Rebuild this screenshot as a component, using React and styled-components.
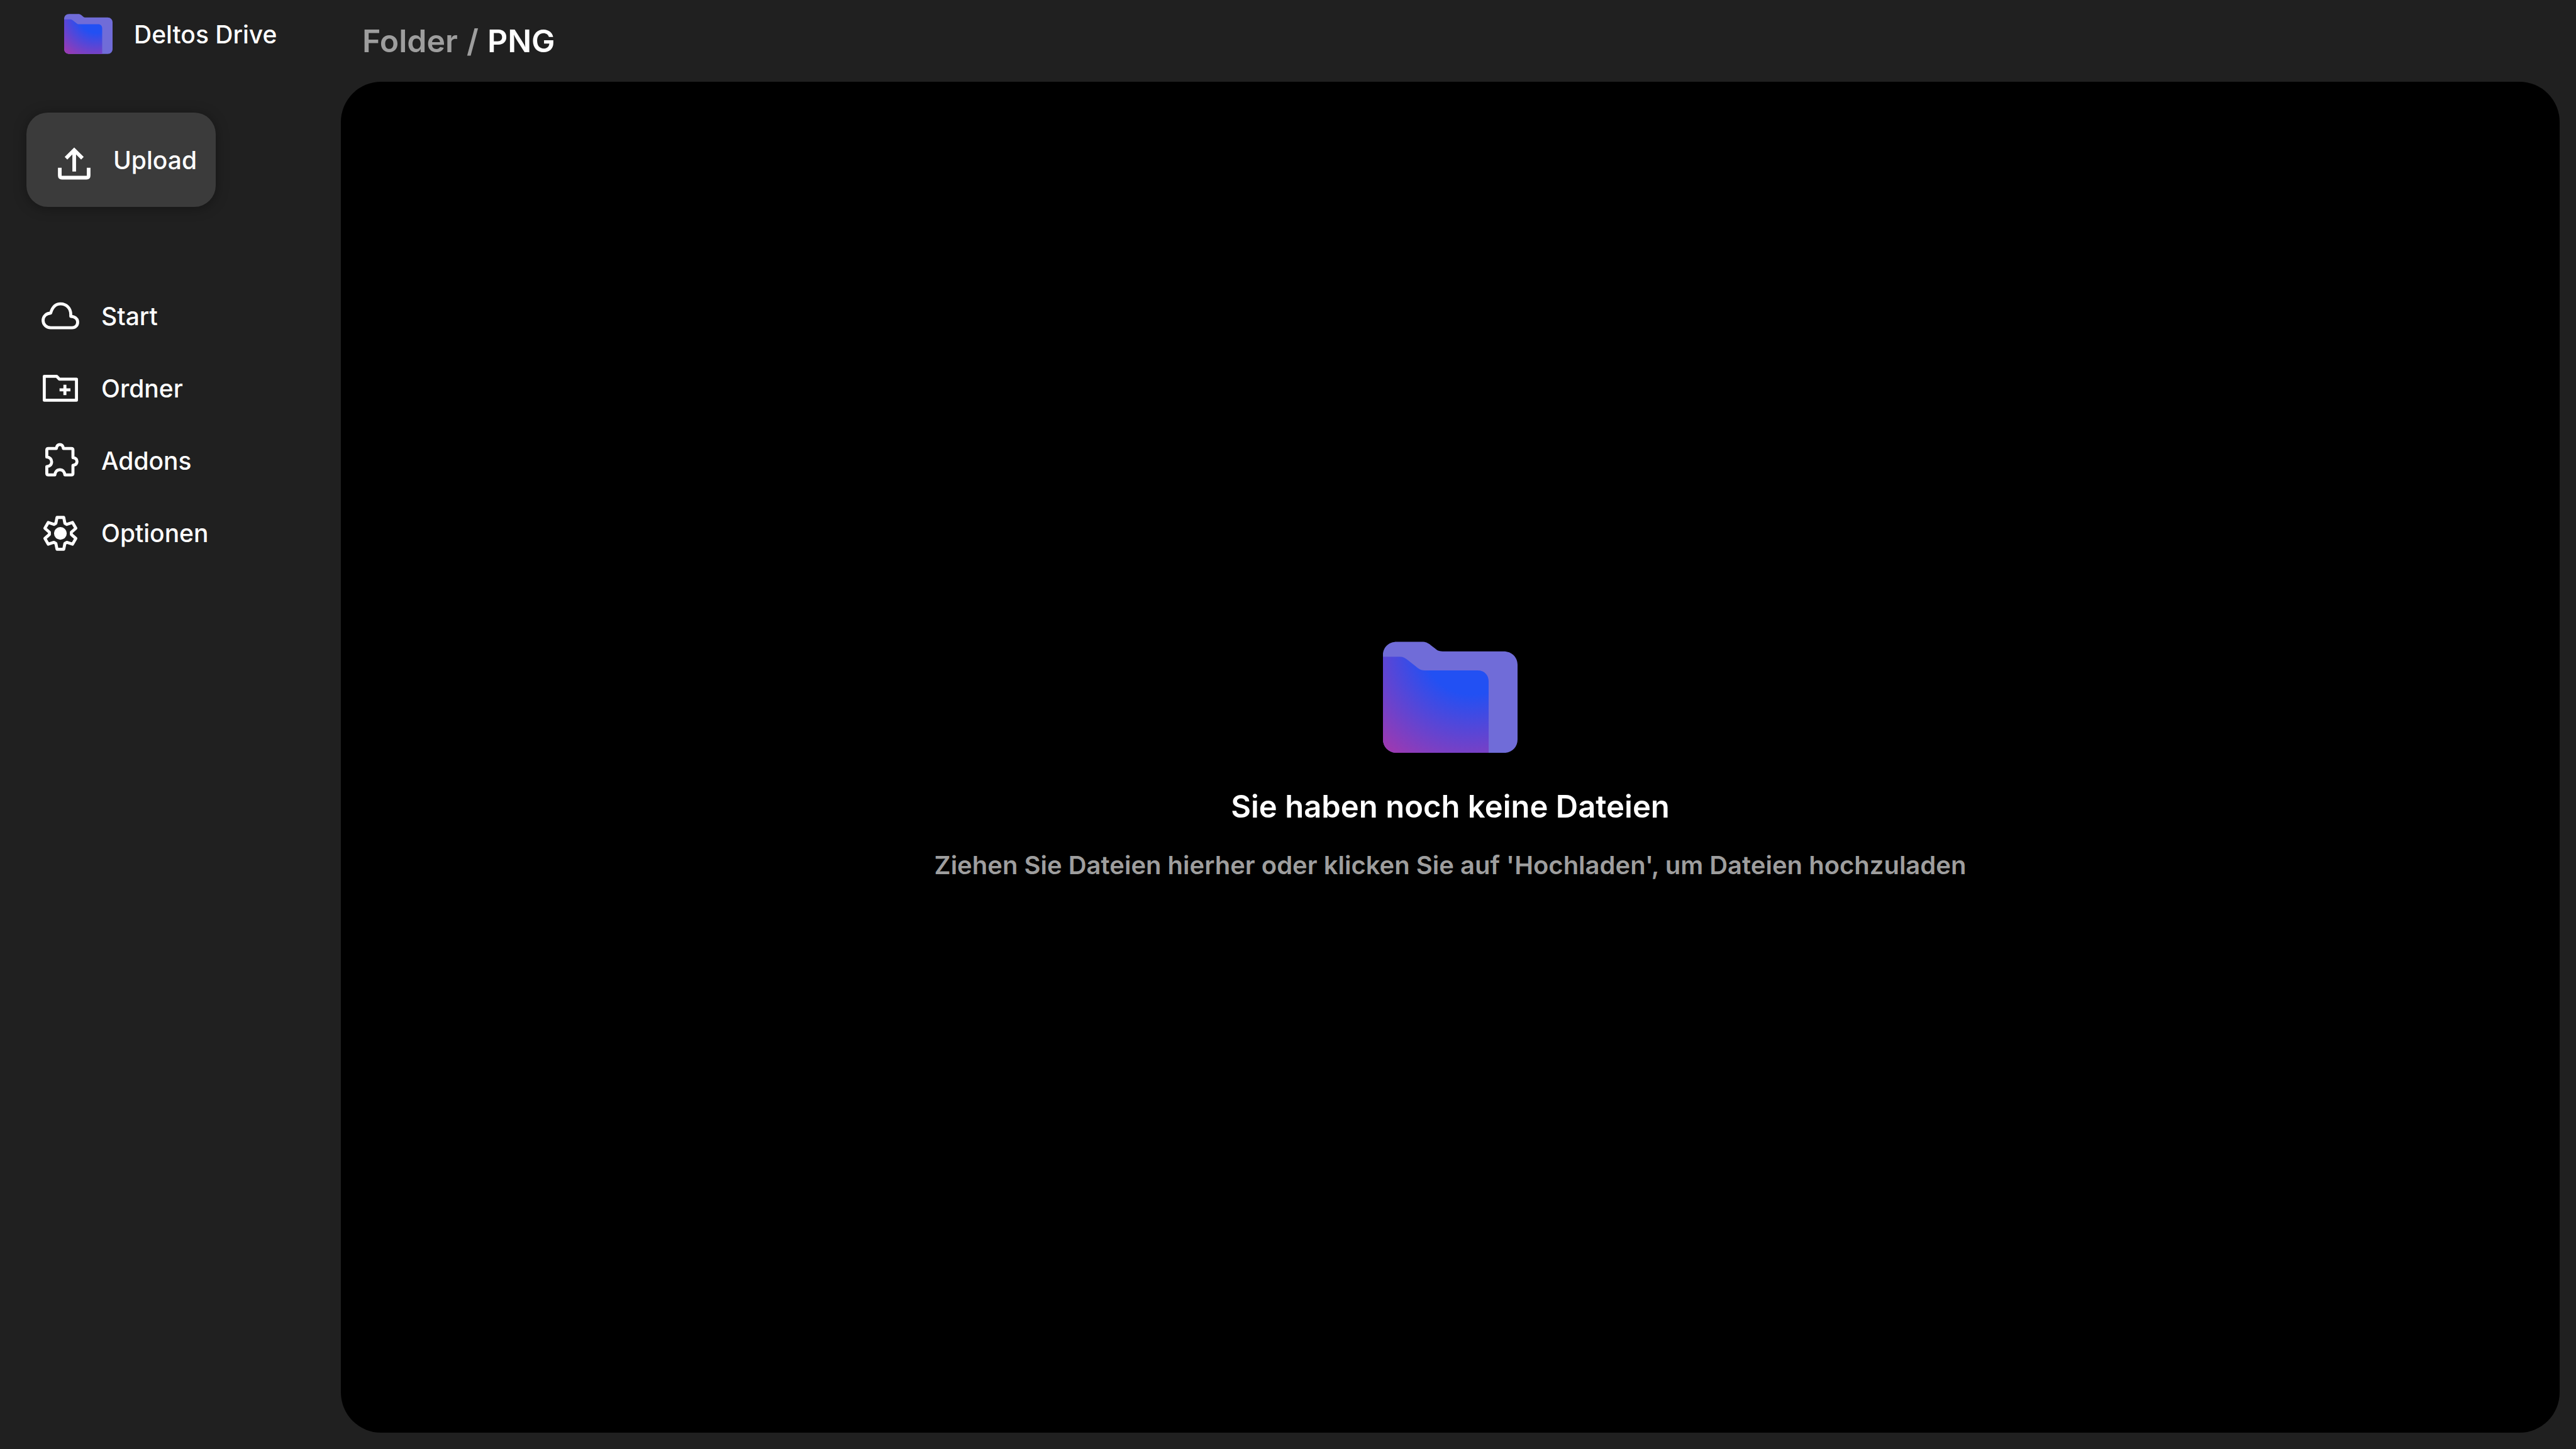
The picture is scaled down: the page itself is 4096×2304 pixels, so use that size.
import React, { useId } from 'react';
import styled, { createGlobalStyle } from 'styled-components';

const GlobalStyle = createGlobalStyle`
  *, *::before, *::after { box-sizing: border-box; }
  body {
    margin: 0;
    background: #202020;
    color: #ffffff;
    font-family: Inter, "Liberation Sans", sans-serif;
    font-size: 39px;
    font-weight: 500;
    line-height: 60px;
  }
`;

const Shell = styled.div`
  display: grid;
  grid-template-columns: 542px minmax(0, 1fr);
  min-height: 100vh;
`;

const Sidebar = styled.aside`
  display: flex;
  flex-direction: column;
  align-items: flex-start;
  padding-top: 22px;
`;

const Brand = styled.a`
  display: flex;
  align-items: center;
  gap: 34px;
  padding-left: 102px;
  color: inherit;
  text-decoration: none;
`;

const FolderSvg = styled.svg`
  display: block;
  width: ${({ $width }) => $width}px;
  height: auto;
`;

const Label = styled.span`
  padding-top: 3px;
`;

const UploadButton = styled.button`
  display: flex;
  align-items: center;
  gap: 30px;
  min-width: 299px;
  height: 150px;
  margin: 93px 0 0 42px;
  padding: 0 30px 0 44px;
  border: 0;
  border-radius: 34px;
  background: #3b3b3b;
  box-shadow: 0 2px 20px rgba(0, 0, 0, 0.35);
  color: inherit;
  font: inherit;
  cursor: pointer;
`;

const Nav = styled.nav`
  margin-top: 141px;
  padding-left: 64px;
`;

const NavList = styled.ul`
  display: flex;
  flex-direction: column;
  gap: 51px;
  margin: 0;
  padding: 0;
  list-style: none;
`;

const NavLink = styled.a`
  display: flex;
  align-items: center;
  gap: 33px;
  height: 64px;
  color: inherit;
  text-decoration: none;
`;

const LineIcon = styled.svg`
  flex: none;
  width: 64px;
  height: 64px;
  fill: none;
  stroke: currentColor;
  stroke-width: 18;
  stroke-linejoin: round;
`;

const Main = styled.main`
  display: flex;
  flex-direction: column;
  padding: 0 26px 26px 0;
`;

const Breadcrumb = styled.nav`
  display: flex;
  align-items: center;
  gap: 14px;
  height: 130px;
  padding-left: 34px;
  color: #9e9e9e;
  font-size: 50px;
  font-weight: 600;
`;

const Crumb = styled.a`
  color: ${({ $current }) => ($current ? '#ffffff' : 'inherit')};
  text-decoration: none;
`;

const DropPanel = styled.section`
  flex: 1;
  display: flex;
  flex-direction: column;
  align-items: center;
  justify-content: center;
  padding-top: 18px;
  border-radius: 64px;
  background: #000000;
  text-align: center;
`;

const EmptyTitle = styled.h1`
  margin: 56px 0 0;
  font-size: 49px;
  font-weight: 600;
  line-height: 60px;
`;

const EmptyHint = styled.p`
  margin: 33px 0 0;
  color: #9e9e9e;
  font-size: 40px;
  font-weight: 600;
`;

function FolderLogo({ width }) {
  const id = useId();
  return (
    <FolderSvg $width={width} viewBox="0 0 801 663" aria-hidden="true">
      <defs>
        <radialGradient id={id} gradientUnits="userSpaceOnUse" cx="530" cy="20" r="822">
          <stop offset="0.36" stopColor="#2250f3" />
          <stop offset="1" stopColor="#a338ae" />
        </radialGradient>
      </defs>
      <path
        fill="#706cd8"
        d="M0 80C0 34 36 2 82 2H232C255 2 268 9 285 22L312 43C327 55 335 59 355 59H718C766 59 801 93 801 138V583C801 630 767 663 720 663H82C36 663 0 629 0 583Z"
      />
      <path
        fill={`url(#${id})`}
        d="M0 91H100C119 91 130 97 145 109L195 148C213 163 225 172 248 172H564C603 172 629 199 629 237V663H82C36 663 0 629 0 583Z"
      />
    </FolderSvg>
  );
}

const UploadIcon = () => (
  <LineIcon viewBox="0 0 240 240" aria-hidden="true">
    <g strokeWidth="22">
      <path d="M120 64V190M71 111L120 62L169 111" strokeLinejoin="miter" />
      <path d="M34 168V214Q34 227 47 227H193Q206 227 206 214V168" />
    </g>
  </LineIcon>
);

const CloudIcon = () => (
  <LineIcon viewBox="0 0 240 240" aria-hidden="true">
    <path d="M62 192C37 192 17 173 17 148C17 124 35 106 62 104C72 70 92 49 121 49C156 49 182 76 182 112V124C206 124 223 138 223 158C223 178 209 192 190 192Z" />
  </LineIcon>
);

const NewFolderIcon = () => (
  <LineIcon viewBox="0 0 240 240" aria-hidden="true">
    <path d="M24 50H98L114 67H216V193H24Z" />
    <path d="M147 100V162M115 131H180" />
  </LineIcon>
);

const AddonIcon = () => (
  <LineIcon viewBox="0 0 240 240" aria-hidden="true">
    <path d="M48 49H96C98 36 104 26 117 26C130 26 136 36 138 49H186Q195 49 195 58V104C210 106 219 115 219 127C219 139 210 148 195 150V198Q195 207 186 207H147C145 190 135 176 117 176C99 176 89 190 87 207H48Q39 207 39 198V157C56 155 68 146 68 129C68 112 56 102 39 100V58Q39 49 48 49Z" />
  </LineIcon>
);

/* One tooth of the gear, turned six times about the centre. */
const TOOTH = [[-27, -60], [-20, -95], [20, -95], [27, -60]];
const GEAR = [0, 1, 2, 3, 4, 5]
  .flatMap((n) => {
    const a = (n * Math.PI) / 3;
    return TOOTH.map(([x, y]) => [
      (120 + x * Math.cos(a) - y * Math.sin(a)).toFixed(1),
      (124 + x * Math.sin(a) + y * Math.cos(a)).toFixed(1),
    ].join(','));
  })
  .join(' ');

const GearIcon = () => (
  <LineIcon viewBox="0 0 240 240" aria-hidden="true">
    <polygon points={GEAR} />
    <circle cx="120" cy="124" r="38" fill="currentColor" stroke="none" />
  </LineIcon>
);

const NAV_ITEMS = [
  { label: 'Start', Icon: CloudIcon },
  { label: 'Ordner', Icon: NewFolderIcon },
  { label: 'Addons', Icon: AddonIcon },
  { label: 'Optionen', Icon: GearIcon },
];

export default function App() {
  return (
    <>
      <GlobalStyle />
      <Shell>
        <Sidebar>
          <Brand href="#">
            <FolderLogo width={77} />
            <Label>Deltos Drive</Label>
          </Brand>
          <UploadButton type="button">
            <UploadIcon />
            <Label>Upload</Label>
          </UploadButton>
          <Nav>
            <NavList>
              {NAV_ITEMS.map(({ label, Icon }) => (
                <li key={label}>
                  <NavLink href="#">
                    <Icon />
                    <Label>{label}</Label>
                  </NavLink>
                </li>
              ))}
            </NavList>
          </Nav>
        </Sidebar>
        <Main>
          <Breadcrumb>
            <Crumb href="#">Folder</Crumb>
            <span>/</span>
            <Crumb href="#" $current aria-current="page">PNG</Crumb>
          </Breadcrumb>
          <DropPanel>
            <FolderLogo width={214} />
            <EmptyTitle>Sie haben noch keine Dateien</EmptyTitle>
            <EmptyHint>
              Ziehen Sie Dateien hierher oder klicken Sie auf 'Hochladen', um Dateien hochzuladen
            </EmptyHint>
          </DropPanel>
        </Main>
      </Shell>
    </>
  );
}
